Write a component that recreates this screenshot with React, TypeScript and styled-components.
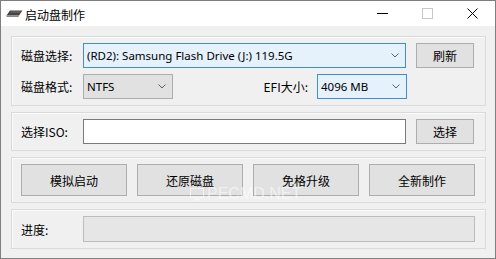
import React from "react";
import styled, { createGlobalStyle } from "styled-components";

const GlobalStyle = createGlobalStyle`
  html, body {
    margin: 0;
    padding: 0;
    background: #f0f0f0;
  }
  * {
    box-sizing: border-box;
  }
`;

const FONT = `"Noto Sans", "Noto Sans CJK SC", sans-serif`;

const Window = styled.div`
  width: 496px;
  height: 259px;
  border: 1px solid #7f7f7f;
  background: #f0f0f0;
  display: flex;
  flex-direction: column;
  font-family: ${FONT};
  font-size: 12px;
  color: #000;
  position: relative;
  overflow: hidden;
`;

const TitleBar = styled.div`
  height: 25px;
  flex-shrink: 0;
  background: #fff;
  display: flex;
  align-items: center;
`;

const TitleIcon = styled.div`
  width: 24px;
  display: flex;
  justify-content: center;
  padding-left: 2px;
`;

const TitleText = styled.span`
  font-family: "Noto Sans CJK SC", sans-serif;
  font-size: 12px;
  flex: 1;
  padding-top: 1px;
`;

const WinButton = styled.div`
  width: 45px;
  height: 25px;
  display: flex;
  align-items: center;
  justify-content: center;
`;

const Body = styled.div`
  flex: 1;
  display: flex;
  flex-direction: column;
  gap: 6px;
  padding: 10px 9px 0 10px;
`;

const Group = styled.div<{ $pb?: number }>`
  border: 1px solid #dadada;
  box-shadow: inset 1px 1px 0 #fbfbfb;
  padding: 6px 10px ${(p) => p.$pb ?? 6}px 9px;
  display: flex;
  flex-direction: column;
  gap: 6px;
`;

const Row = styled.div<{ $h?: number }>`
  display: flex;
  align-items: center;
  height: ${(p) => p.$h ?? 25}px;
`;

const Label = styled.span<{ $w?: number }>`
  width: ${(p) => (p.$w ? `${p.$w}px` : "auto")};
  flex-shrink: 0;
  font-family: "Noto Sans CJK SC", sans-serif;
  font-size: 12px;
  white-space: nowrap;
`;

const Combo = styled.div<{ $w: number; $active?: boolean }>`
  width: ${(p) => p.$w}px;
  height: 25px;
  flex-shrink: 0;
  border: 1px solid ${(p) => (p.$active ? "#3d8ed8" : "#adadad")};
  background: ${(p) => (p.$active ? "#e5f1fb" : "#e1e1e1")};
  display: flex;
  align-items: center;
  padding: 0 6px 0 3px;
  font-family: ${FONT};
  font-size: 11.5px;
  white-space: nowrap;
`;

const ComboText = styled.span`
  flex: 1;
  overflow: hidden;
`;

const Button = styled.div<{ $w?: number; $h?: number }>`
  width: ${(p) => (p.$w ? `${p.$w}px` : "auto")};
  height: ${(p) => p.$h ?? 25}px;
  flex-shrink: 0;
  border: 1px solid #adadad;
  background: #e1e1e1;
  display: flex;
  align-items: center;
  justify-content: center;
  font-family: "Noto Sans CJK SC", sans-serif;
  font-size: 12px;
`;

const TextInput = styled.div`
  width: 323px;
  height: 25px;
  flex-shrink: 0;
  border: 1px solid #7a7a7a;
  background: #fff;
`;

const Spacer = styled.div<{ $w?: number }>`
  ${(p) => (p.$w ? `width: ${p.$w}px; flex-shrink: 0;` : "flex: 1;")}
`;

const ButtonGrid = styled.div`
  display: grid;
  grid-template-columns: repeat(4, 106px);
  gap: 10px;
`;

const Progress = styled.div`
  width: 392px;
  height: 26px;
  flex-shrink: 0;
  border: 1px solid #bcbcbc;
  background: #e6e6e6;
`;

const Watermark = styled.div`
  position: absolute;
  left: 189px;
  top: 185px;
  display: flex;
  align-items: center;
  gap: 3px;
  color: rgba(255, 255, 255, 0.55);
  font-family: "Liberation Sans", sans-serif;
  font-size: 16px;
  line-height: 16px;
  pointer-events: none;
`;

const Chevron = () => (
  <svg width="8" height="5" viewBox="0 0 8 5">
    <path d="M0.5 0.5 L4 4 L7.5 0.5" fill="none" stroke="#606060" strokeWidth="1" />
  </svg>
);

const DriveIcon = () => (
  <svg width="17" height="8" viewBox="0 0 17 8">
    <path d="M4 0.5 L16.5 0.5 L13 5.5 L0.5 5.5 Z" fill="#444" />
    <path d="M0.5 5.5 L13 5.5 L12.5 7 L0.5 7 Z" fill="#888" />
    <path d="M5 1.5 L15 1.5 L14.2 2.5 L4.3 2.5 Z" fill="#777" />
  </svg>
);

export default function App() {
  return (
    <>
      <GlobalStyle />
      <Window>
        <TitleBar>
          <TitleIcon>
            <DriveIcon />
          </TitleIcon>
          <TitleText>启动盘制作</TitleText>
          <WinButton>
            <svg width="11" height="2" viewBox="0 0 11 2">
              <rect x="0" y="0" width="11" height="1" fill="#000" />
            </svg>
          </WinButton>
          <WinButton>
            <svg width="11" height="11" viewBox="0 0 11 11">
              <rect x="0.5" y="0.5" width="10" height="10" fill="none" stroke="#c8c8c8" />
            </svg>
          </WinButton>
          <WinButton>
            <svg width="11" height="11" viewBox="0 0 11 11">
              <path d="M0.5 0.5 L10.5 10.5 M10.5 0.5 L0.5 10.5" stroke="#000" strokeWidth="1" />
            </svg>
          </WinButton>
        </TitleBar>
        <Body>
          <Group>
            <Row>
              <Label $w={62}>磁盘选择:</Label>
              <Combo $w={323} $active>
                <ComboText>(RD2): Samsung Flash Drive (J:) 119.5G</ComboText>
                <Chevron />
              </Combo>
              <Spacer $w={10} />
              <Button $w={58}>刷新</Button>
            </Row>
            <Row>
              <Label $w={62}>磁盘格式:</Label>
              <Combo $w={90}>
                <ComboText>NTFS</ComboText>
                <Chevron />
              </Combo>
              <Spacer />
              <Label>EFI大小:</Label>
              <Spacer $w={9} />
              <Combo $w={90} $active>
                <ComboText>4096 MB</ComboText>
                <Chevron />
              </Combo>
              <Spacer $w={68} />
            </Row>
          </Group>
          <Group>
            <Row>
              <Label $w={62}>选择ISO:</Label>
              <TextInput />
              <Spacer $w={10} />
              <Button $w={58}>选择</Button>
            </Row>
          </Group>
          <Group>
            <ButtonGrid>
              <Button $h={32}>模拟启动</Button>
              <Button $h={32}>还原磁盘</Button>
              <Button $h={32}>免格升级</Button>
              <Button $h={32}>全新制作</Button>
            </ButtonGrid>
          </Group>
          <Group>
            <Row $h={26}>
              <Label $w={62}>进度:</Label>
              <Progress />
            </Row>
          </Group>
        </Body>
        <Watermark>
          <svg width="14" height="13" viewBox="0 0 14 13">
            <rect x="0.5" y="0.5" width="13" height="9" fill="none" stroke="rgba(255,255,255,0.6)" />
            <rect x="4" y="11" width="6" height="1.5" fill="rgba(255,255,255,0.6)" />
          </svg>
          <span>PECMD.NET</span>
        </Watermark>
      </Window>
    </>
  );
}
